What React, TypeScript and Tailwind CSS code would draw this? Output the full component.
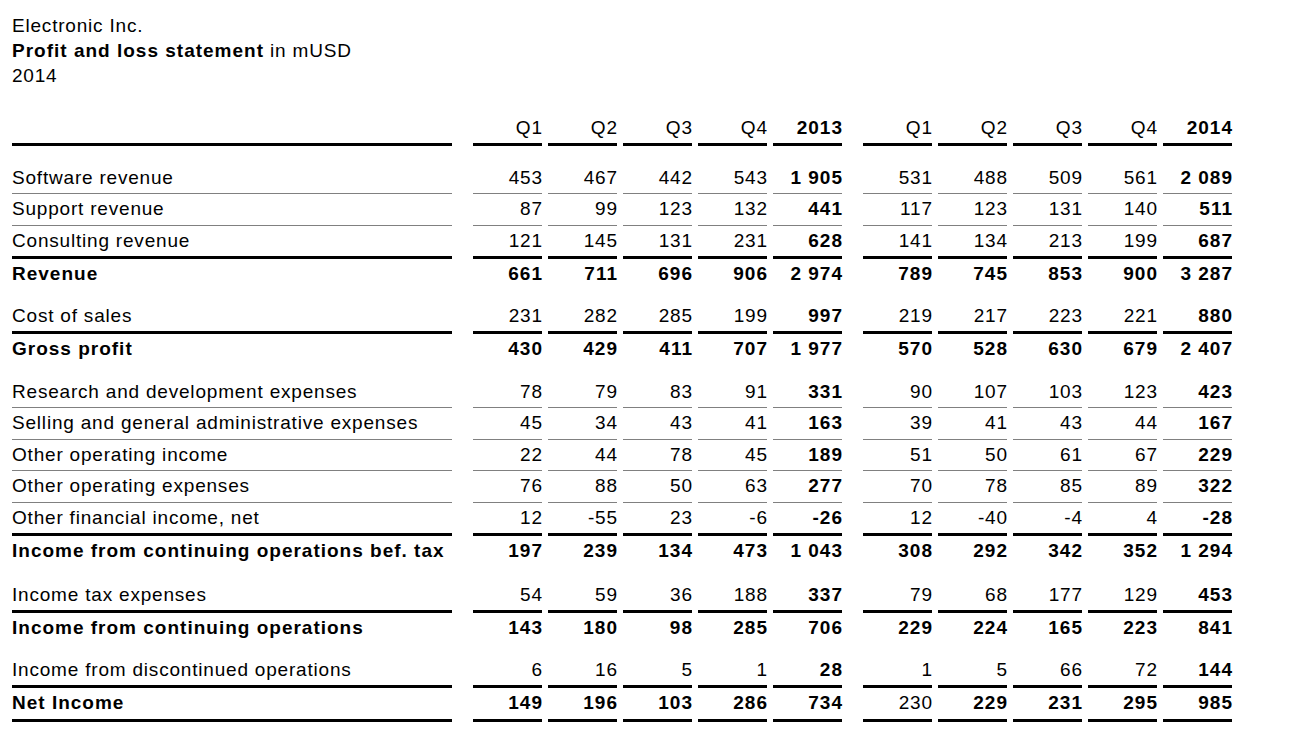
import React from 'react';

type Line = 'thin' | 'thick' | 'none';

interface Row {
    label: string;
    bold?: boolean;
    line: Line;
    mt?: string;
    y2013: (number | string)[];
    y2014: (number | string)[];
    plain2014?: number[];
}

const rows: Row[] = [
    { label: 'Software revenue', line: 'thin', mt: 'mt-[16.5px]', y2013: [453, 467, 442, 543, '1 905'], y2014: [531, 488, 509, 561, '2 089'] },
    { label: 'Support revenue', line: 'thin', y2013: [87, 99, 123, 132, 441], y2014: [117, 123, 131, 140, 511] },
    { label: 'Consulting revenue', line: 'thick', y2013: [121, 145, 131, 231, 628], y2014: [141, 134, 213, 199, 687] },
    { label: 'Revenue', bold: true, line: 'none', y2013: [661, 711, 696, 906, '2 974'], y2014: [789, 745, 853, 900, '3 287'] },
    { label: 'Cost of sales', line: 'thick', mt: 'mt-[11px]', y2013: [231, 282, 285, 199, 997], y2014: [219, 217, 223, 221, 880] },
    { label: 'Gross profit', bold: true, line: 'none', y2013: [430, 429, 411, 707, '1 977'], y2014: [570, 528, 630, 679, '2 407'] },
    { label: 'Research and development expenses', line: 'thin', mt: 'mt-[12px]', y2013: [78, 79, 83, 91, 331], y2014: [90, 107, 103, 123, 423] },
    { label: 'Selling and general administrative expenses', line: 'thin', y2013: [45, 34, 43, 41, 163], y2014: [39, 41, 43, 44, 167] },
    { label: 'Other operating income', line: 'thin', y2013: [22, 44, 78, 45, 189], y2014: [51, 50, 61, 67, 229] },
    { label: 'Other operating expenses', line: 'thin', y2013: [76, 88, 50, 63, 277], y2014: [70, 78, 85, 89, 322] },
    { label: 'Other financial income, net', line: 'thick', y2013: [12, -55, 23, -6, -26], y2014: [12, -40, -4, 4, -28] },
    { label: 'Income from continuing operations bef. tax', bold: true, line: 'none', y2013: [197, 239, 134, 473, '1 043'], y2014: [308, 292, 342, 352, '1 294'] },
    { label: 'Income tax expenses', line: 'thick', mt: 'mt-[13px]', y2013: [54, 59, 36, 188, 337], y2014: [79, 68, 177, 129, 453] },
    { label: 'Income from continuing operations', bold: true, line: 'none', y2013: [143, 180, 98, 285, 706], y2014: [229, 224, 165, 223, 841] },
    { label: 'Income from discontinued operations', line: 'thick', mt: 'mt-[11px]', y2013: [6, 16, 5, 1, 28], y2014: [1, 5, 66, 72, 144] },
    { label: 'Net Income', bold: true, line: 'thick', y2013: [149, 196, 103, 286, 734], y2014: [230, 229, 231, 295, 985], plain2014: [0] },
];

const lineCls = (line: Line) =>
    line === 'thin' ? 'border-b border-[#808080]' : line === 'thick' ? 'border-b-[3px] border-black' : '';

const weight = (bold: boolean) => (bold ? 'font-bold tracking-[1px]' : 'font-normal tracking-[0.8px]');

const NumCell = ({ value, bold, line }: { value: number | string; bold: boolean; line: Line }) => (
    <div className={`w-[69px] h-[30.5px] leading-[30.5px] text-right box-content ${lineCls(line)} ${weight(bold)}`}>
        <span className={bold ? '-mr-[1px]' : '-mr-[0.8px]'}>{value}</span>
    </div>
);

const Group = ({ values, row, plain = [] }: { values: (number | string)[]; row: Row; plain?: number[] }) => (
    <div className="flex gap-[6px] ml-[21px]">
        {values.map((v, i) => {
            const bold = plain.includes(i) ? false : row.bold || i === 4;
            return <NumCell key={i} value={v} bold={!!bold} line={row.line} />;
        })}
    </div>
);

export default function App() {
    const head = ['Q1', 'Q2', 'Q3', 'Q4'];

    return (
        <div className="min-h-screen bg-white text-black font-['Liberation_Sans',Arial,sans-serif] text-[19px]">
            <div className="pl-[12px] pt-[12.5px] leading-[25px] tracking-[0.8px]">
                <div>Electronic Inc.</div>
                <div>
                    <span className="font-bold tracking-[1px]">Profit and loss statement</span> in mUSD
                </div>
                <div>2014</div>
            </div>

            <div className="pl-[12px] mt-[25px] whitespace-nowrap">
                {/* header */}
                <div className="flex">
                    <div className={`w-[440px] h-[30.5px] box-content ${lineCls('thick')}`}></div>
                    {['2013', '2014'].map((year) => (
                        <div key={year} className="flex gap-[6px] ml-[21px]">
                            {head.map((q) => (
                                <NumCell key={q} value={q} bold={false} line="thick" />
                            ))}
                            <NumCell value={year} bold line="thick" />
                        </div>
                    ))}
                </div>

                {rows.map((row) => (
                    <div key={row.label} className={`flex ${row.mt ?? ''}`}>
                        <div className={`w-[440px] h-[30.5px] leading-[30.5px] box-content ${lineCls(row.line)} ${weight(!!row.bold)}`}>
                            {row.label}
                        </div>
                        <Group values={row.y2013} row={row} />
                        <Group values={row.y2014} row={row} plain={row.plain2014} />
                    </div>
                ))}
            </div>
        </div>
    );
}
